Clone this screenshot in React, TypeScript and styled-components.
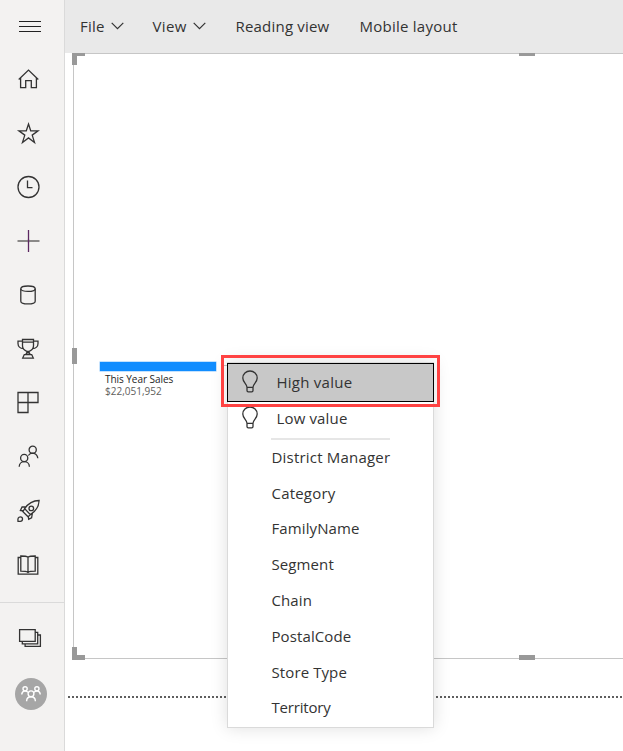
import React from "react";
import styled, { createGlobalStyle } from "styled-components";

const GlobalStyle = createGlobalStyle`
  * { box-sizing: border-box; }
  body {
    margin: 0;
    overflow: hidden;
    background: #fff;
    color: #333;
    font-family: "Open Sans", "Noto Sans", sans-serif;
  }
`;

const Shell = styled.div`
  display: flex;
  width: 623px;
  height: 751px;
  overflow: hidden;
`;

const Sidebar = styled.nav`
  display: flex;
  flex-direction: column;
  flex: 0 0 65px;
  background: #f3f2f1;
  border-right: 1px solid #dadada;
`;

const NavButton = styled.button<{ $height?: number }>`
  display: flex;
  align-items: center;
  flex: 0 0 ${(p) => p.$height ?? 54}px;
  padding: 0 0 0 16px;
  border: 0;
  background: transparent;
  color: #333;
`;

const SidebarRule = styled.div`
  flex: 0 0 1px;
  margin-top: 10px;
  margin-bottom: 8px;
  background: #dadada;
`;

const Avatar = styled.span`
  display: flex;
  align-items: center;
  justify-content: center;
  width: 32px;
  height: 32px;
  margin-left: -1px;
  border-radius: 50%;
  background: #a6a6a6;
  color: #fff;
`;

const Main = styled.main`
  display: flex;
  flex-direction: column;
  flex: 1;
  min-width: 0;
`;

const Toolbar = styled.header`
  display: flex;
  flex: 0 0 53px;
  align-items: center;
  padding-left: 15px;
  background: #e9e9e9;
`;

const ToolbarItem = styled.button<{ $width: number; $spacing: number }>`
  display: flex;
  align-items: center;
  gap: 6px;
  flex: 0 0 ${(p) => p.$width}px;
  height: 53px;
  padding: 0 0 2px;
  border: 0;
  background: transparent;
  color: #333;
  font: 400 15px/20px "Open Sans", "Noto Sans", sans-serif;
  letter-spacing: ${(p) => p.$spacing}px;
  white-space: nowrap;
`;

const Canvas = styled.section`
  position: relative;
  flex: 0 0 606px;
  margin-left: 8px;
  border: 1px solid #c6c6c6;
  border-right: 0;
  padding: 308px 0 0 26px;
`;

const Handle = styled.i<{ $x: number; $y: number; $w: number; $h: number }>`
  position: absolute;
  left: ${(p) => p.$x}px;
  top: ${(p) => p.$y}px;
  width: ${(p) => p.$w}px;
  height: ${(p) => p.$h}px;
  background: #999;
`;

const DottedRule = styled.div`
  height: 2px;
  margin: 37px 0 0 3px;
  background: repeating-linear-gradient(90deg, #5e5e5e 0 2px, transparent 2px 4px);
`;

const TreeNode = styled.div`
  display: flex;
  flex-direction: column;
  width: 116px;
`;

const NodeBar = styled.div`
  height: 9px;
  margin-bottom: 2px;
  background: #118dff;
  box-shadow: 0 0 0 0.5px #8cc6fc;
`;

const NodeText = styled.div<{ $muted?: boolean }>`
  padding-left: 5px;
  color: ${(p) => (p.$muted ? "#605e5c" : "#252423")};
  font-size: 10px;
  line-height: 12px;
  letter-spacing: ${(p) => (p.$muted ? 0 : -0.05)}px;
  white-space: nowrap;
`;

const Connector = styled.i`
  position: absolute;
  left: 224px;
  top: 365px;
  width: 3px;
  height: 1px;
  background: #c8c6c4;
`;

const Menu = styled.div`
  position: absolute;
  left: 227px;
  top: 362px;
  display: flex;
  flex-direction: column;
  width: 207px;
  height: 366px;
  border: 1px solid #dadada;
  background: #fff;
  box-shadow: 0 0 16px rgba(0, 0, 0, 0.13);
`;

const MenuItem = styled.button<{ $height?: number; $active?: boolean; $icon?: boolean; $spacing?: number }>`
  display: flex;
  align-items: center;
  flex: 0 0 ${(p) => p.$height ?? 35.8}px;
  gap: 18px;
  margin: ${(p) => (p.$active ? "0 -1px" : "0")};
  padding: 0 0 ${(p) => (p.$active ? 1 : 0)}px ${(p) => (p.$active || p.$icon ? 12.5 : 43.5)}px;
  border: ${(p) => (p.$active ? "1px solid #000" : "0")};
  background: ${(p) => (p.$active ? "#c8c8c8" : "transparent")};
  color: #333;
  font: 400 15px/20px "Open Sans", "Noto Sans", sans-serif;
  letter-spacing: ${(p) => p.$spacing ?? 0}px;
  white-space: nowrap;
`;

const MenuRule = styled.div`
  flex: 0 0 2px;
  width: 119px;
  margin: 5px 0 -1px 43px;
  background: #e6e6e6;
`;

const Highlight = styled.div`
  position: absolute;
  left: 221px;
  top: 355px;
  width: 219px;
  height: 52px;
  border: 3px solid #ff4343;
`;

const Icon = ({ size = 24, sw = 1.3, children }: { size?: number; sw?: number; children: React.ReactNode }) => (
  <svg width={size} height={size} viewBox={`0 0 ${size} ${size}`} fill="none" stroke="currentColor" strokeWidth={sw}>
    {children}
  </svg>
);

const Chevron = () => (
  <svg width="13" height="8" viewBox="0 0 13 8" fill="none" stroke="currentColor" strokeWidth="1.2">
    <path d="M.7 .8 6.5 6.6 12.3 .8" />
  </svg>
);

const Bulb = () => (
  <svg width="18" height="24" viewBox="0 0 18 24" fill="none" stroke="#333" strokeWidth="1.3">
    <path d="M6 17.2C6 14 1.8 12.3 1.8 7.9a7.2 6.9 0 0 1 14.4 0c0 4.4-4.2 6.1-4.2 9.3v3.4q0 1.3-1.3 1.3H7.3Q6 21.9 6 20.6zM6 17.4h6" />
  </svg>
);

const icons = [
  <Icon key="home"><path d="M2.7 12.5 12.5 3.1l9.8 9.4M4.6 10.9v9.8h5.1v-7h5.6v7h5.1v-9.8" /></Icon>,
  <Icon key="star"><path d="m12.5 3 2.2 6.8h7.4l-5.9 4.3 2.3 7.3-6-4.5-6 4.5 2.3-7.3-5.9-4.3h7.4z" /></Icon>,
  <Icon key="clock"><circle cx="12.5" cy="12" r="10.5" /><path d="M11.5 5.5v7.2h5" /></Icon>,
  <Icon key="plus"><path d="M12.5 1v22" stroke="#5c2862" /><path d="M1.5 12h22" stroke="#8a8988" strokeWidth="2" /><path d="M12.5 10.5v3" stroke="#5c2862" /></Icon>,
  <Icon key="data"><ellipse cx="12" cy="5.7" rx="7.2" ry="2.7" /><path d="M4.8 5.7v12.5c0 3.6 14.4 3.6 14.4 0V5.7" /></Icon>,
  <Icon key="goals"><path d="M6.5 2.5h11v6.3c0 3-2.4 4.8-4.3 5.6v3h-2.4v-3c-1.9-.8-4.3-2.6-4.3-5.6zM6.5 5.2h11M6.5 4.1H2v2.3c0 2.8 2.1 5.1 5.4 5.1M17.5 4.1H22v2.3c0 2.8-2.1 5.1-5.4 5.1M12 14.4l-2.4 3.2h4.8zM8.3 17.6h7.4l1.6 3.5H6.7z" /></Icon>,
  <Icon key="apps"><path d="M2 1.5h20v10H12v10H2zM2 11.5h10v-10" /></Icon>,
  <Icon key="shared"><circle cx="8.2" cy="13" r="3.6" /><path d="M3.2 21.7c.2-6.7 10-6.7 10.2 0" /><circle cx="16.7" cy="4.8" r="3.6" /><path d="M12.3 10.5c2.8-4 8.9-2.5 9.5 2.8" /></Icon>,
  <Icon key="learn"><path d="M23.1 1.5c-6 .1-11.2 3.4-14.4 8.1l5.7 6c5-3.2 8.5-7.6 8.7-14.1zM10.2 8H6.1l-1.7 3.4 3.4.6M8.7 9.6l-1.8 3 5.2 5.2 2.3-2.2M12.1 16.7l.6 3.5 2.9-1.3.8-4.8" /><circle cx="15.3" cy="9.4" r="2.3" /><path d="M2 22.3c-.4-2.9.3-4.5 2.4-4.5 2.9 0 2.8 4.4-.1 4.5z" /></Icon>,
  <Icon key="book"><path d="M12 4.2v15M12 4.2C10.6 3.2 8.4 3 4.8 3v15.2c3.4 0 5.6.1 7.2 1.2 1.6-1.1 3.8-1.2 7.2-1.2V3c-3.6 0-5.8.2-7.2 1.2zM4.8 4.5H2.2v16.6h19.6V4.5h-2.6" /></Icon>,
];

export default function App() {
  return (
    <>
      <GlobalStyle />
      <Shell>
        <Sidebar>
          <NavButton $height={52} aria-label="Navigation">
            <svg width="26" height="16" viewBox="0 0 26 16" stroke="#222" strokeWidth="1">
              <path d="M3 3.5h22M3 8.5h22M3 13.5h22" />
            </svg>
          </NavButton>
          {icons.map((icon) => <NavButton key={icon.key}>{icon}</NavButton>)}
          <SidebarRule />
          <NavButton $height={54} aria-label="Workspaces">
            <Icon size={26}><path d="M3.6 4.6h15.6v11.7H3.6zM6.3 16.3v2.6h15.4V7.3h-2.5M9.1 18.9v2.4h15.3V10h-2.7" /></Icon>
          </NavButton>
          <NavButton $height={58} aria-label="My workspace">
            <Avatar>
              <svg width="22" height="18" viewBox="0 0 22 18" fill="none" stroke="currentColor" strokeWidth="1.4">
                <circle cx="11" cy="8.8" r="2.9" /><path d="M6.6 16.2c.2-5.9 8.6-5.9 8.8 0" />
                <circle cx="5.1" cy="3.8" r="2.1" /><circle cx="16.9" cy="3.8" r="2.1" />
                <path d="M1.8 9.4c0-3.4 4.1-4.5 6.3-2M20.2 9.4c0-3.4-4.1-4.5-6.3-2" />
              </svg>
            </Avatar>
          </NavButton>
        </Sidebar>
        <Main>
          <Toolbar>
            <ToolbarItem $width={72.5} $spacing={0.2}>File<Chevron /></ToolbarItem>
            <ToolbarItem $width={83} $spacing={0.35}>View<Chevron /></ToolbarItem>
            <ToolbarItem $width={124} $spacing={0.2}>Reading view</ToolbarItem>
            <ToolbarItem $width={110} $spacing={0.25}>Mobile layout</ToolbarItem>
          </Toolbar>
          <Canvas>
            <Handle $x={-2} $y={-1} $w={13} $h={3} />
            <Handle $x={-2} $y={-1} $w={5} $h={12} />
            <Handle $x={445} $y={-1} $w={16} $h={3} />
            <Handle $x={-2} $y={294} $w={5} $h={16} />
            <Handle $x={-2} $y={593} $w={5} $h={13} />
            <Handle $x={-2} $y={601} $w={13} $h={5} />
            <Handle $x={445} $y={601} $w={16} $h={5} />
            <TreeNode>
              <NodeBar />
              <NodeText>This Year Sales</NodeText>
              <NodeText $muted>$22,051,952</NodeText>
            </TreeNode>
          </Canvas>
          <DottedRule />
        </Main>
        <Connector />
        <Menu>
          <MenuItem $active $icon $height={39} $spacing={0.25}><Bulb />High value</MenuItem>
          <MenuItem $icon $height={31} $spacing={0.15}><Bulb />Low value</MenuItem>
          <MenuRule />
          {["District Manager", "Category", "FamilyName", "Segment", "Chain", "PostalCode", "Store Type", "Territory"].map((label) => (
            <MenuItem key={label} $spacing={label === "Territory" ? -0.2 : label === "District Manager" || label === "Category" ? 0.2 : 0.1}>{label}</MenuItem>
          ))}
        </Menu>
        <Highlight />
      </Shell>
    </>
  );
}
